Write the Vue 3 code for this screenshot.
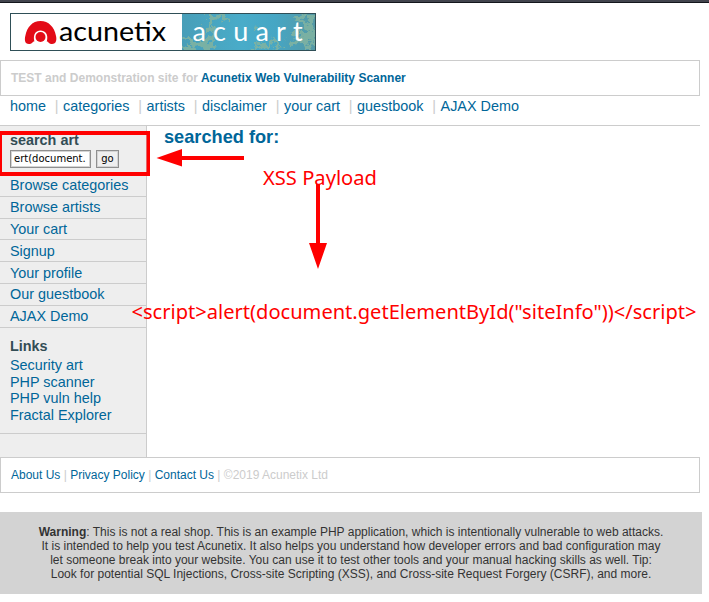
<script setup>
const nav = ['home', 'categories', 'artists', 'disclaimer', 'your cart', 'guestbook', 'AJAX Demo']
const menu = ['Browse categories', 'Browse artists', 'Your cart', 'Signup', 'Your profile', 'Our guestbook', 'AJAX Demo']
const links = ['Security art', 'PHP scanner', 'PHP vuln help', 'Fractal Explorer']
</script>

<template>
  <div class="page">
    <div class="chrome"></div>
    <header class="masthead">
      <svg class="logo" width="306" height="38" viewBox="0 0 306 38">
        <defs>
          <filter id="rough" x="-20%" y="-20%" width="140%" height="140%">
            <feTurbulence type="fractalNoise" baseFrequency="0.16" numOctaves="4" seed="8" result="n" />
            <feDisplacementMap in="SourceGraphic" in2="n" scale="17" xChannelSelector="R" yChannelSelector="G" />
          </filter>
          <clipPath id="art"><rect x="172" y="1" width="133" height="36" /></clipPath>
          <linearGradient id="sea" x1="0" x2="1" y1="0" y2="0">
            <stop offset="0" stop-color="#489eb8" />
            <stop offset=".45" stop-color="#49acc9" />
            <stop offset=".7" stop-color="#46a6c4" />
            <stop offset="1" stop-color="#5599a5" />
          </linearGradient>
        </defs>
        <rect width="306" height="38" fill="#fff" />
        <rect x="172" y="1" width="133" height="36" fill="url(#sea)" />
        <g clip-path="url(#art)">
          <g filter="url(#rough)" fill="none" stroke="#7fb3a2" opacity=".9">
            <path d="M198 -2l5 8 8-4 9 6M205 6l-6 8 5 9-9 9M174 25l9 5 11-2 6 9M174 37l16-5 14 5" stroke-width="5" />
            <path d="M243 14l3 4M241 38l8-7 8 3 5-7 9 7M263 38l6-10" stroke-width="4" />
            <path d="M306 0l-9 9 5 9-9 8 6 12M286 4l9 5M282 18l13 3M279 30l14-3M306 22l-9 2 9 8" stroke-width="5" />
          </g>
        </g>
        <path d="M19 31C14.500 31 14.500 26.500 15.300 23C17 14 22.500 8 30.500 8S44.500 14 46 23C46.800 26.500 46.500 31 42 31C38.500 31 38.500 28.500 37 28.500H24C22.500 28.500 22.500 31 19 31Z" fill="#e30b17" />
        <path d="M24.500 31C24 30 24.500 29 24.200 27.500C23 21 26 17.500 30.500 17.500S38.500 21 37 27.500C36.500 29 37 30 36.500 31Z" fill="#fff" />
        <circle cx="30.500" cy="24" r="5" fill="#e30b17" />
        <text x="49" y="28" class="brand" textLength="107" lengthAdjust="spacingAndGlyphs">acunetix</text>
        <text x="182.500" y="28" class="art">acuart</text>
        <rect x=".5" y=".5" width="305" height="37" fill="none" stroke="#2f4f57" />
      </svg>
    </header>

    <div class="notice">TEST and Demonstration site for <a>Acunetix Web Vulnerability Scanner</a></div>

    <nav class="nav">
      <template v-for="(n, i) in nav" :key="n">
        <span v-if="i" class="sep">|</span><a>{{ n }}</a>
      </template>
    </nav>

    <div class="body">
      <aside class="side">
        <h3 class="search-title">search art</h3>
        <div class="form">
          <div class="field"><span>ert(document.</span></div>
          <div class="button">go</div>
        </div>
        <ul class="menu">
          <li v-for="m in menu" :key="m"><a>{{ m }}</a></li>
        </ul>
        <div class="links">
          <h3>Links</h3>
          <ul>
            <li v-for="l in links" :key="l"><a>{{ l }}</a></li>
          </ul>
        </div>
      </aside>
      <main class="content"><h2>searched for:</h2></main>
    </div>

    <footer class="foot"><a>About Us</a> | <a>Privacy Policy</a> | <a>Contact Us</a> | ©2019 Acunetix Ltd</footer>

    <div class="warning">
      <div><b>Warning</b>: This is not a real shop. This is an example PHP application, which is intentionally vulnerable to web attacks.</div>
      <div>It is intended to help you test Acunetix. It also helps you understand how developer errors and bad configuration may</div>
      <div>let someone break into your website. You can use it to test other tools and your manual hacking skills as well. Tip:</div>
      <div>Look for potential SQL Injections, Cross-site Scripting (XSS), and Cross-site Request Forgery (CSRF), and more.</div>
    </div>

    <svg class="notes" width="709" height="602" viewBox="0 0 709 602" fill="#f00">
      <path fill-rule="evenodd" d="M-2 131H150V176H-2ZM2 135V172H146.500V135Z" />
      <path d="M156.500 158L182 149V156H244V160H182V166.500Z" />
      <path d="M316 184H320V243H327L318 269L309 243H316Z" />
      <text x="263" y="185" textLength="114" lengthAdjust="spacingAndGlyphs">XSS Payload</text>
      <text x="131.500" y="319" textLength="565" lengthAdjust="spacingAndGlyphs">&lt;script&gt;alert(document.getElementById("siteInfo"))&lt;/script&gt;</text>
    </svg>
  </div>
</template>

<style>
body {
  margin: 0;
  background: #fff;
}
</style>

<style scoped>
.page {
  position: relative;
  width: 709px;
  height: 602px;
  overflow: hidden;
  font-family: "Liberation Sans", Arial, sans-serif;
  font-size: 14.4px;
  color: #334d55;
}
h2, h3, ul {
  margin: 0;
  padding: 0;
  list-style: none;
}
a {
  color: #006699;
}
.chrome {
  box-sizing: border-box;
  height: 3px;
  background: #42444d;
  border-bottom: 1px solid #14161c;
}
.masthead {
  height: 47px;
  padding: 10px 0 0 10px;
}
.logo {
  display: block;
}
.brand {
  font: 27px Lato, sans-serif;
  fill: #000;
}
.art {
  font: 27px Lato, sans-serif;
  letter-spacing: 7.200px;
  fill: #fff;
}
.notice, .foot {
  box-sizing: border-box;
  width: 700px;
  height: 36px;
  padding-left: 10px;
  border: 1px solid #ccc;
  font-size: 12px;
  line-height: 34px;
  color: #ccc;
}
.notice {
  font-weight: bold;
  word-spacing: .06px;
}
.nav {
  display: flex;
  box-sizing: border-box;
  width: 700px;
  height: 30px;
  padding: 2px 0 0 10px;
  border-bottom: 1px solid #ccc;
  line-height: 17px;
  white-space: nowrap;
}
.sep {
  padding: 0 4.500px 0 8.850px;
  color: #ccc;
}
.body {
  display: flex;
  height: 331px;
}
.side {
  box-sizing: border-box;
  width: 147px;
  background: #eee;
  border-right: 1px solid #ccc;
}
h3 {
  padding-left: 10px;
  font-size: 14.4px;
  line-height: 17px;
}
.search-title {
  padding-top: 6px;
}
.form {
  display: flex;
  gap: 5px;
  padding: 1px 0 7px 10px;
  font: 10px "DejaVu Sans", sans-serif;
  color: #000;
}
.field, .button {
  box-sizing: border-box;
  height: 18px;
  border: 1px solid #8f8f8f;
  box-shadow: inset 0 0 0 1px #d4d4d4;
  line-height: 15px;
}
.field {
  width: 81px;
  padding-left: 3px;
  background: #fff;
  overflow: hidden;
}
.button {
  width: 23px;
  background: #efefef;
  text-align: center;
}
.menu li {
  box-sizing: border-box;
  height: 21.800px;
  padding: .35px 0 0 10px;
  border-bottom: 1px solid #ccc;
  line-height: 20px;
}
.links {
  box-sizing: border-box;
  height: 106.400px;
  padding-top: 10px;
  border-bottom: 1px solid #ccc;
}
.links ul {
  padding: 2.450px 0 0 10px;
}
.links li {
  height: 16.550px;
  line-height: 17px;
}
.content {
  padding: 1px 0 0 17px;
}
h2 {
  font-size: 18.200px;
  line-height: 21px;
  color: #006699;
}
.warning {
  box-sizing: border-box;
  width: 702px;
  height: 82px;
  margin-top: 19px;
  padding-top: 13px;
  background: #d3d3d3;
  color: #333;
  font-size: 12px;
  line-height: 14px;
  text-align: center;
  white-space: nowrap;
}
.notes {
  position: absolute;
  top: 0;
  left: 0;
  font: 20.500px "Noto Sans", sans-serif;
}
</style>
